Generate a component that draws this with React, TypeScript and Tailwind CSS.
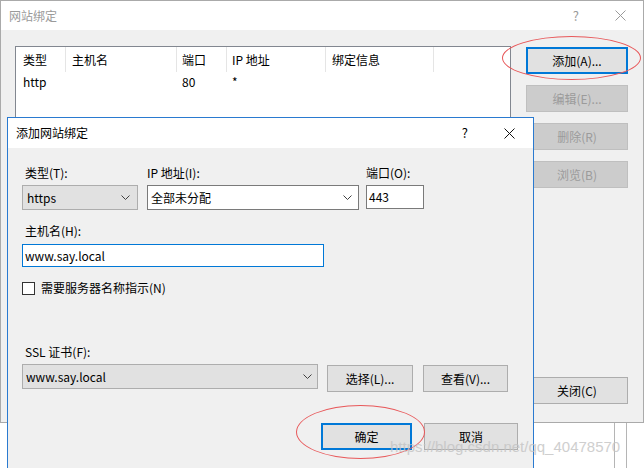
import React from "react";

const Chevron = () => (
  <svg width="9" height="5" viewBox="0 0 9 5" className="shrink-0">
    <polyline points="0.5,0.5 4.5,4.5 8.5,0.5" fill="none" stroke="#404040" strokeWidth="1" />
  </svg>
);

const CloseX = ({ color }: { color: string }) => (
  <svg width="11" height="11" viewBox="0 0 11 11" className="shrink-0">
    <line x1="0.5" y1="0.5" x2="10.5" y2="10.5" stroke={color} strokeWidth="1" />
    <line x1="10.5" y1="0.5" x2="0.5" y2="10.5" stroke={color} strokeWidth="1" />
  </svg>
);

type Variant = "focus" | "normal" | "disabled";

const Btn = ({ children, w, variant = "normal" }: { children: React.ReactNode; w: string; variant?: Variant }) => {
  const base = "h-[27px] flex items-center justify-center text-[12px] leading-[16px] shrink-0";
  const cls =
    variant === "focus"
      ? "bg-[#e1e1e1] border-2 border-[#0078d7] text-black"
      : variant === "disabled"
      ? "bg-[#cccccc] border border-[#bfbfbf] text-[#9b9b9b]"
      : "bg-[#e1e1e1] border border-[#adadad] text-black";
  return <div className={`${base} ${cls} ${w}`}>{children}</div>;
};

export default function App() {
  return (
    <div className="relative w-[644px] h-[468px] overflow-hidden bg-white font-['Noto_Sans_CJK_SC','Noto_Sans',sans-serif] text-[12px] leading-[16px] text-black">
      {/* stray lines behind */}
      <div className="absolute left-[614px] top-[422px] w-px h-[46px] bg-[#b5b5b5]" />
      <div className="absolute left-[626px] top-[422px] w-px h-[46px] bg-[#b5b5b5]" />

      {/* background window */}
      <div className="absolute left-0 top-0 w-[644px] h-[423px] border border-[#aaaaaa] bg-[#f0f0f0] flex flex-col">
        <div className="h-[29px] bg-white flex items-center pl-[8px] pr-[17px] text-[#9a9a9a]">
          <span>网站绑定</span>
          <span className="ml-auto text-[13px]">?</span>
          <span className="ml-[36px] flex"><CloseX color="#9a9a9a" /></span>
        </div>
        <div className="flex-1 flex pl-[14px] pt-[16px]">
          <div className="w-[496px] h-[358px] bg-white border border-[#828790] flex flex-col">
            <div className="flex h-[25px] items-center">
              <div className="w-[50px] pl-[7px] h-full flex items-center border-r border-[#e5e5e5]">类型</div>
              <div className="w-[111px] pl-[6px] h-full flex items-center border-r border-[#e5e5e5]">主机名</div>
              <div className="w-[50px] pl-[5px] h-full flex items-center border-r border-[#e5e5e5]">端口</div>
              <div className="w-[99px] pl-[5px] h-full flex items-center border-r border-[#e5e5e5]">IP 地址</div>
              <div className="w-[108px] pl-[6px] h-full flex items-center border-r border-[#e5e5e5]">绑定信息</div>
            </div>
            <div className="flex h-[20px] items-center">
              <div className="w-[50px] pl-[7px]">http</div>
              <div className="w-[111px]" />
              <div className="w-[50px] pl-[5px]">80</div>
              <div className="w-[99px] pl-[5px]">*</div>
            </div>
          </div>
          <div className="ml-[15px] flex flex-col pt-[1px]">
            <Btn w="w-[102px]" variant="focus">添加(A)...</Btn>
            <div className="mt-[11px]"><Btn w="w-[102px]" variant="disabled">编辑(E)...</Btn></div>
            <div className="mt-[11px]"><Btn w="w-[102px]" variant="disabled">删除(R)</Btn></div>
            <div className="mt-[11px]"><Btn w="w-[102px]" variant="disabled">浏览(B)</Btn></div>
            <div className="mt-[189px]"><Btn w="w-[102px]">关闭(C)</Btn></div>
          </div>
        </div>
      </div>

      {/* foreground dialog */}
      <div className="absolute left-[7px] top-[117px] w-[527px] h-[370px] border border-[#2a7ad0] bg-[#f0f0f0] flex flex-col">
        <div className="h-[30px] bg-white flex items-center pl-[8px] pr-[18px]">
          <span>添加网站绑定</span>
          <span className="ml-auto text-[13px]">?</span>
          <span className="ml-[36px] flex"><CloseX color="#111" /></span>
        </div>
        <div className="flex flex-col pl-[14px] pt-[17px]">
          <div className="flex items-start">
            <div className="w-[116px] flex flex-col">
              <div className="ml-[3px] h-[16px]">类型(T):</div>
              <div className="mt-[4px] h-[25px] bg-[#e1e1e1] border border-[#adadad] flex items-center pl-[4px] pr-[7px]">
                <span className="flex-1">https</span>
                <Chevron />
              </div>
            </div>
            <div className="ml-[9px] w-[212px] flex flex-col">
              <div className="h-[16px]">IP 地址(I):</div>
              <div className="mt-[4px] h-[25px] bg-white border border-[#7a7a7a] flex items-center pl-[3px] pr-[6px]">
                <span className="flex-1">全部未分配</span>
                <Chevron />
              </div>
            </div>
            <div className="ml-[7px] w-[58px] flex flex-col">
              <div className="h-[16px]">端口(O):</div>
              <div className="mt-[4px] h-[24px] bg-white border border-[#7a7a7a] flex items-center pl-[2px]">443</div>
            </div>
          </div>

          <div className="mt-[13px] ml-[3px] h-[16px]">主机名(H):</div>
          <div className="mt-[5px] w-[302px] h-[23px] bg-white border border-[#0078d7] flex items-center pl-[2px]">www.say.local</div>

          <div className="mt-[13px] h-[16px] flex items-center">
            <div className="w-[13px] h-[13px] bg-white border border-[#333333]" />
            <span className="ml-[6px]">需要服务器名称指示(N)</span>
          </div>

          <div className="mt-[48px] ml-[3px] h-[16px]">SSL 证书(F):</div>
          <div className="mt-[4px] flex items-start">
            <div className="w-[296px] h-[25px] bg-[#e1e1e1] border border-[#adadad] flex items-center pl-[3px] pr-[5px]">
              <span className="flex-1">www.say.local</span>
              <Chevron />
            </div>
            <div className="ml-[9px] mt-[1px]"><Btn w="w-[86px]">选择(L)...</Btn></div>
            <div className="ml-[10px] mt-[1px]"><Btn w="w-[85px]">查看(V)...</Btn></div>
          </div>

          <div className="mt-[31px] flex justify-end pr-[15px] gap-[12px]">
            <Btn w="w-[91px]" variant="focus">确定</Btn>
            <Btn w="w-[94px]">取消</Btn>
          </div>
        </div>
      </div>

      {/* annotations */}
      <div className="absolute left-[502px] top-[36px] w-[139px] h-[44px] rounded-[50%] border border-[#e8585a]" />
      <div className="absolute left-[296px] top-[405px] w-[129px] h-[54px] rounded-[50%] border border-[#e8585a]" />
      <div className="absolute left-[390px] top-[438px] text-[15px] leading-[18px] font-['Liberation_Sans',sans-serif] text-[#c4c4c4] opacity-80 whitespace-nowrap">
        https://blog.csdn.net/qq_40478570
      </div>
    </div>
  );
}
